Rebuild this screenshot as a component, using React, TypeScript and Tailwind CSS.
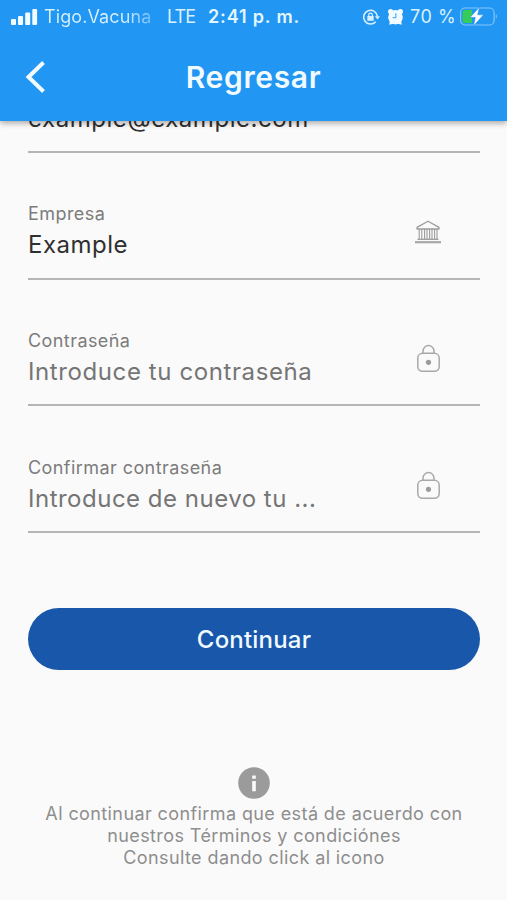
import type { ReactNode } from "react";

function BankIcon() {
  return (
    <svg className="mb-[3px]" width="28" height="26" viewBox="0 0 28 26" fill="none" stroke="#9c9c9c" strokeWidth="1.3">
      <path d="M14 2.2 L25 8.4 V10 H3 V8.4 Z" strokeLinejoin="round" />
      <path d="M5.200 10 V20 M7.800 10 V20 M10.600 10 V20 M13 10 V20 M15.600 10 V20 M18 10 V20 M20.600 10 V20 M23 10 V20" strokeWidth="1.100" />
      <path d="M3.500 20.300 H24.500" strokeWidth="1.300" />
      <path d="M1 23.200 H27" strokeWidth="2.200" stroke="#a8a8a8" />
    </svg>
  );
}

function LockIcon() {
  return (
    <svg width="28" height="30" viewBox="0 0 28 30" fill="none" stroke="#a8a8a8" strokeWidth="1.5">
      <rect x="3.8" y="9.3" width="21.4" height="18" rx="4.8" />
      <path d="M9 9.3 V7.100 a5.5 5.500 0 0 1 11 0 V9.3" />
      <circle cx="14.500" cy="18.300" r="2.6" fill="#9c9c9c" stroke="none" />
    </svg>
  );
}

function Field({ label, children, icon }: { label: string; children: ReactNode; icon: ReactNode }) {
  return (
    <div className="flex h-[126.7px] items-end justify-between border-b-2 border-[#b5b5b5]">
      <div className="pb-[16.5px]">
        <div className="text-[18px] leading-[28px] tracking-[0.43px] text-[#7c7c7c]">{label}</div>
        <div className="text-[24px] leading-[33px] whitespace-nowrap">{children}</div>
      </div>
      <div className="mr-[38px] mb-[30px] flex">{icon}</div>
    </div>
  );
}

function StatusBar() {
  return (
    <div className="flex h-[34px] items-center text-[18px] leading-[34px] text-[#d9f1ff]">
      <svg className="ml-[10px] shrink-0" width="28" height="18" viewBox="0 0 28 18" fill="#f2fbff">
        <rect x="1" y="11" width="5" height="6" rx="1" />
        <rect x="8" y="8" width="5" height="9" rx="1" />
        <rect x="15.200" y="4.500" width="5" height="12.500" rx="1" />
        <rect x="22.300" y="1" width="4.800" height="16" rx="1" />
      </svg>
      <span className="ml-[6px] w-[123px] bg-linear-to-r from-[#d9f1ff] from-65% to-[#63b5f8] to-90% bg-clip-text tracking-[0.1px] whitespace-nowrap text-transparent">Tigo.Vacuna</span>
      <span className="w-[41px] tracking-[-0.9px]">LTE</span>
      <span className="w-[154px] font-semibold tracking-[0.85px] whitespace-nowrap text-[#e4f6ff]">2:41 p. m.</span>
      <svg className="shrink-0" width="18" height="18" viewBox="0 0 18 18" fill="none" stroke="#d9f1ff" strokeWidth="1.6">
        <path d="M13.700 13.700 A6.900 6.900 0 1 1 15.400 8.500" />
        <path d="M12.900 8.300 H18 L15.500 11.500 Z" fill="#d9f1ff" stroke="none" />
        <rect x="5.300" y="8" width="6.400" height="4.800" rx=".6" fill="#d9f1ff" stroke="none" />
        <path d="M6.700 8 V6.900 a1.800 1.800 0 0 1 3.600 0 V8" strokeWidth="1.200" />
      </svg>
      <svg className="ml-[7px] shrink-0" width="17" height="18" viewBox="0 0 17 18">
        <g fill="#f2fbff">
          <circle cx="8.500" cy="9.200" r="7.300" />
          <circle cx="3.600" cy="3.600" r="2.600" />
          <circle cx="13.400" cy="3.600" r="2.600" />
          <path d="M3 12 L2.200 16.700 L7 15.500 Z M14 12 L14.800 16.700 L10 15.500 Z" />
        </g>
        <path d="M8.800 5.200 V9.600 H5.600" fill="none" stroke="#5cb2f8" strokeWidth="1.300" />
      </svg>
      <span className="ml-[6px] w-[49px] tracking-[0.6px] whitespace-nowrap">70 %</span>
      <svg className="shrink-0" width="40" height="22" viewBox="0 0 40 22">
        <rect x="1.600" y="2" width="33.500" height="17" rx="4.500" fill="none" stroke="#83c6fa" strokeWidth="1.200" />
        <path d="M6 4 H13 V17 H6 A2.500 2.500 0 0 1 3.500 14.500 V6.500 A2.500 2.500 0 0 1 6 4 Z" fill="#35cc5c" />
        <path d="M36.800 7.700 Q39 10.400 36.800 13.200 Z" fill="#83c6fa" />
        <path d="M20.500 1 L11 11.500 H16.300 L14.500 20 L24.500 8.800 H18.700 Z" fill="#fff" stroke="#2196f3" strokeWidth=".6" />
      </svg>
    </div>
  );
}

export default function App() {
  return (
    <div className="flex h-[900px] w-[507px] flex-col overflow-hidden bg-[#fafafa] font-['Inter','Liberation_Sans',sans-serif]">
      <header className="relative z-10 h-[121px] shrink-0 bg-[#2196f3] shadow-[0_2px_6px_rgba(0,0,0,0.35)]">
        <StatusBar />
        <div className="grid h-[86px] grid-cols-[1fr_auto_1fr] items-center">
          <svg className="ml-[24px]" width="24" height="34" viewBox="0 0 24 34" fill="none" stroke="#f2fbff" strokeWidth="4">
            <path d="M19.500 2.500 L4.500 17 L19.500 31.500" />
          </svg>
          <h1 className="text-[30px] leading-[40px] font-semibold tracking-[0.65px] text-[#f0faff]">Regresar</h1>
        </div>
      </header>

      <main className="mx-[28px] flex w-[452px] flex-col">
        <div className="flex h-[32px] flex-col justify-end overflow-hidden border-b-2 border-[#b5b5b5] pb-[16.5px]">
          <div className="text-[24px] leading-[33px] tracking-[0.55px] text-[#303030]">example@example.com</div>
        </div>
        <Field label="Empresa" icon={<BankIcon />}>
          <span className="tracking-[0.5px] text-[#303030]">Example</span>
        </Field>
        <Field label="Contraseña" icon={<LockIcon />}>
          <span className="tracking-[0.6px] text-[#757575]">Introduce tu contraseña</span>
        </Field>
        <Field label="Confirmar contraseña" icon={<LockIcon />}>
          <span className="tracking-[0.5px] text-[#757575]">Introduce de nuevo tu ...</span>
        </Field>

        <button className="mt-[75px] h-[62px] rounded-full bg-[#1857aa] pt-[2px] text-[24px] font-medium tracking-[0.2px] text-[#f0faff]">Continuar</button>

        <div className="mt-[97px] flex flex-col items-center">
          <svg width="32" height="32" viewBox="0 0 32 32">
            <circle cx="16" cy="16" r="15.800" fill="#9b9b9b" />
            <path d="M14.200 8.500 h3.600 v3.200 h-3.600 Z M14.200 14 h3.600 v10.200 h-3.600 Z" fill="#fafafa" />
          </svg>
          <p className="mt-[3.6px] text-center text-[18px] leading-[22.2px] tracking-[0.4px] whitespace-nowrap text-[#8e8e8e]">
            Al continuar confirma que está de acuerdo con
            <br />
            nuestros Términos y condiciónes
            <br />
            Consulte dando click al icono
          </p>
        </div>
      </main>
    </div>
  );
}
